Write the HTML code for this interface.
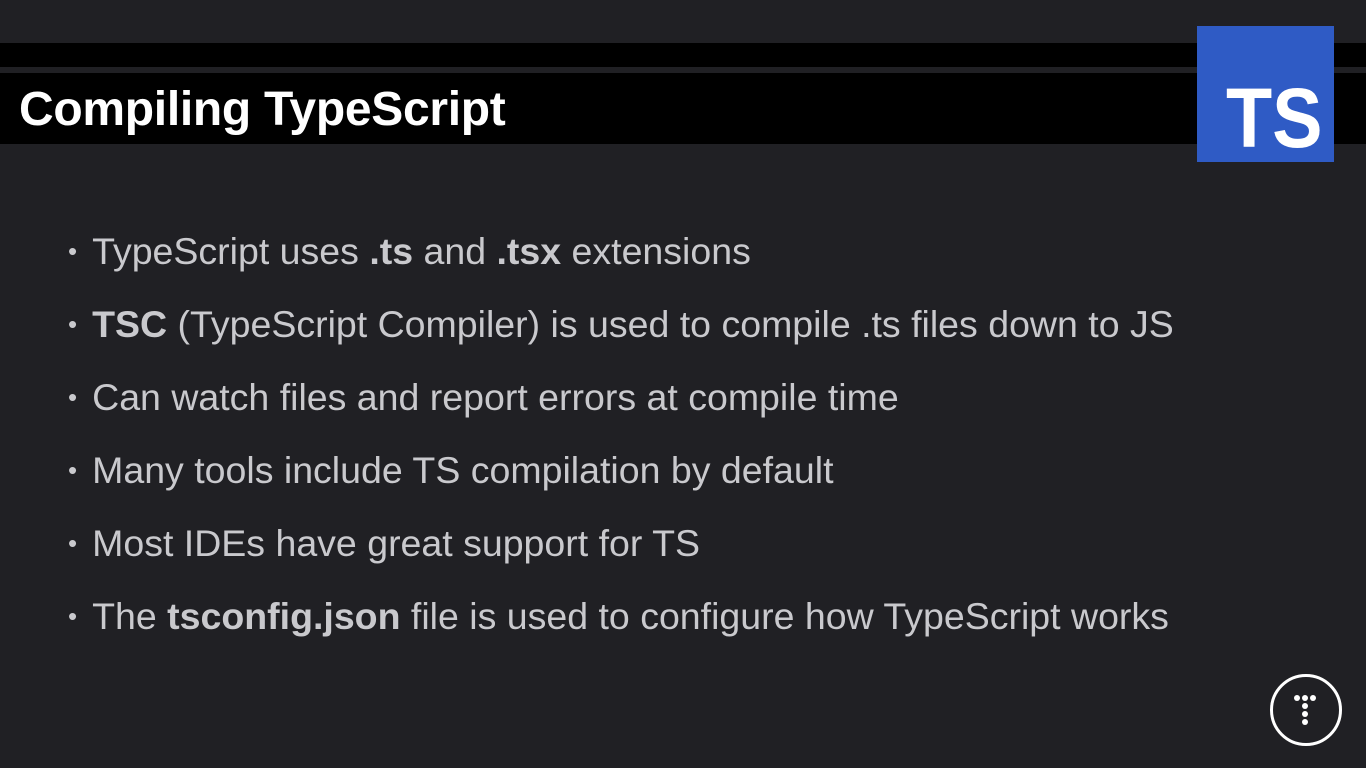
<!DOCTYPE html>
<html><head><meta charset="utf-8"><style>
html,body{margin:0;padding:0}
body{width:1366px;height:768px;background:#202024;position:relative;overflow:hidden;font-family:"Liberation Sans",Arial,sans-serif}
.band1{position:absolute;left:0;top:43px;width:1366px;height:24px;background:#000}
.band2{position:absolute;left:0;top:73px;width:1366px;height:71px;background:#000}
.title{position:absolute;left:19px;top:80px;font-size:48px;font-weight:bold;color:#fff;line-height:60px;letter-spacing:-0.3px}
.ts{position:absolute;left:1197px;top:26px;width:137px;height:136px;background:#2f5bc5}
.ts span{position:absolute;left:29px;top:50px;font-size:84px;font-weight:bold;color:#fff;line-height:84px;transform:scaleX(0.9);transform-origin:left top}
ul{position:absolute;left:68px;top:225px;margin:0;padding:0;list-style:none}
li{font-size:37.5px;color:#c9c9cd;height:73px;line-height:52px;white-space:nowrap}
li:before{content:"•";font-size:26px;margin-right:15px;position:relative;top:-4px}
b{font-weight:bold}
.logo{position:absolute;left:1270px;top:674px;width:72px;height:72px;border:3px solid #fff;border-radius:50%;box-sizing:border-box}
.d{position:absolute;width:6px;height:6px;background:#fff;border-radius:50%}
</style></head><body>
<div class="band1"></div><div class="band2"></div>
<div class="title">Compiling TypeScript</div>
<div class="ts"><span>TS</span></div>
<ul>
<li>TypeScript uses <b>.ts</b> and <b>.tsx</b> extensions</li>
<li><b>TSC</b> (TypeScript Compiler) is used to compile .ts files down to JS</li>
<li>Can watch files and report errors at compile time</li>
<li>Many tools include TS compilation by default</li>
<li>Most IDEs have great support for TS</li>
<li>The <b>tsconfig.json</b> file is used to configure how TypeScript works</li>
</ul>
<div class="logo">
<div class="d" style="left:21px;top:18px"></div>
<div class="d" style="left:29px;top:18px"></div>
<div class="d" style="left:37px;top:18px"></div>
<div class="d" style="left:29px;top:26px"></div>
<div class="d" style="left:29px;top:34px"></div>
<div class="d" style="left:29px;top:42px"></div>
</div>
</body></html>
